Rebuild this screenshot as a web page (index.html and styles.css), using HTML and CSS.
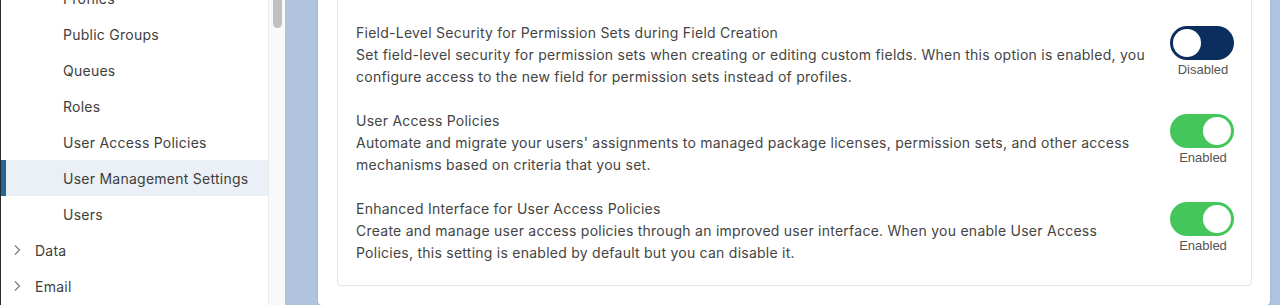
FILE: index.html
```html
<!DOCTYPE html>
<html lang="en">
<head>
    <meta charset="UTF-8">
    <meta name="viewport" content="width=device-width, initial-scale=1.0">
    <title>User Management Settings</title>
    <link rel="stylesheet" href="styles.css">
</head>
<body>
    <div class="layout">
        <nav class="sidebar">
            <ul class="tree">
                <li class="sub">Profiles</li>
                <li class="sub">Public Groups</li>
                <li class="sub">Queues</li>
                <li class="sub">Roles</li>
                <li class="sub">User Access Policies</li>
                <li class="sub active">User Management Settings</li>
                <li class="sub">Users</li>
                <li class="group">
                    <svg class="chevron" width="8" height="12" viewBox="0 0 8 12"><polyline points="2,1.5 6.5,6 2,10.5" /></svg>
                    Data
                </li>
                <li class="group">
                    <svg class="chevron" width="8" height="12" viewBox="0 0 8 12"><polyline points="2,1.5 6.5,6 2,10.5" /></svg>
                    Email
                </li>
            </ul>
        </nav>

        <div class="scrollbar">
            <div class="thumb"></div>
        </div>

        <main class="main">
            <section class="card">
                <div class="settings">
                    <div class="setting">
                        <div class="setting-text">
                            <div class="setting-title">Field-Level Security for Permission Sets during Field Creation</div>
                            <p>Set field-level security for permission sets when creating or editing custom fields. When this option is enabled, you configure access to the new field for permission sets instead of profiles.</p>
                        </div>
                        <div class="toggle-wrap">
                            <span class="toggle off"><span class="knob"></span></span>
                            <span class="toggle-label">Disabled</span>
                        </div>
                    </div>

                    <div class="setting">
                        <div class="setting-text">
                            <div class="setting-title">User Access Policies</div>
                            <p>Automate and migrate your users' assignments to managed package licenses, permission sets, and other access mechanisms based on criteria that you set.</p>
                        </div>
                        <div class="toggle-wrap">
                            <span class="toggle on"><span class="knob"></span></span>
                            <span class="toggle-label">Enabled</span>
                        </div>
                    </div>

                    <div class="setting">
                        <div class="setting-text">
                            <div class="setting-title">Enhanced Interface for User Access Policies</div>
                            <p>Create and manage user access policies through an improved user interface. When you enable User Access Policies, this setting is enabled by default but you can disable it.</p>
                        </div>
                        <div class="toggle-wrap">
                            <span class="toggle on"><span class="knob"></span></span>
                            <span class="toggle-label">Enabled</span>
                        </div>
                    </div>
                </div>
            </section>
        </main>
    </div>
</body>
</html>
```

FILE: styles.css
```css
* {
    box-sizing: border-box;
}

body {
    margin: 0;
    font-family: Inter, "Liberation Sans", sans-serif;
    font-size: 14px;
    letter-spacing: 0.25px;
    color: #3e3e3c;
    background-color: #b0c4df;
}

.layout {
    display: flex;
    height: 305px;
    overflow: hidden;
}

/* sidebar tree */
.sidebar {
    width: 268px;
    flex-shrink: 0;
    background-color: #fff;
    border-left: 1px solid #2b2b2b;
}

.tree {
    list-style: none;
    margin: -20px 0 0;
    padding: 0;
}

.tree li {
    display: flex;
    align-items: center;
    height: 36px;
    white-space: nowrap;
}

.sub {
    padding-left: 62px;
}

.group {
    padding-left: 12px;
}

.active {
    background-color: #eaf0f5;
    box-shadow: inset 5px 0 0 #23669a;
}

.chevron {
    margin-right: 14px;
}

.chevron polyline {
    fill: none;
    stroke: #7a7a7a;
    stroke-width: 1.2;
}

.scrollbar {
    width: 17px;
    flex-shrink: 0;
    background-color: #f9f9f9;
    border-left: 1px solid #ececec;
    padding: 0 3px 0 4px;
}

.thumb {
    height: 34px;
    margin-top: -6px;
    background-color: #c1c1c1;
    border-radius: 5px;
}

/* main area */
.main {
    flex: 1;
    padding: 0 10px 3px 33px;
}

.card {
    margin-top: -30px;
    height: 335px;
    padding: 0 18px 19px 19px;
    background-color: #fff;
    border-radius: 4px;
    box-shadow: 0 1px 2px rgba(0, 0, 0, 0.15);
    display: flex;
    flex-direction: column;
    justify-content: flex-end;
}

.settings {
    border: 1px solid #e5e5e5;
    border-radius: 4px;
    padding: 10px 17px 21px 18px;
}

.setting {
    display: flex;
    gap: 20px;
    margin-top: 22px;
    line-height: 22px;
    color: #444;
}

.setting-text {
    flex: 1;
}

.setting-text p {
    margin: 0;
}

.toggle-wrap {
    width: 64px;
    padding-top: 4px;
    display: flex;
    flex-direction: column;
    align-items: center;
}

.toggle {
    display: flex;
    width: 64px;
    height: 34px;
    padding: 3px;
    border-radius: 17px;
}

.toggle.off {
    background-color: #0b2e5e;
}

.toggle.on {
    background-color: #45c65a;
    justify-content: flex-end;
}

.knob {
    width: 28px;
    height: 28px;
    border-radius: 50%;
    background-color: #fff;
}

.toggle-label {
    font-family: "Liberation Sans", sans-serif;
    font-size: 13px;
    letter-spacing: 0;
    line-height: 17px;
    color: #555;
    margin: 1px 0 0 2px;
}
```
